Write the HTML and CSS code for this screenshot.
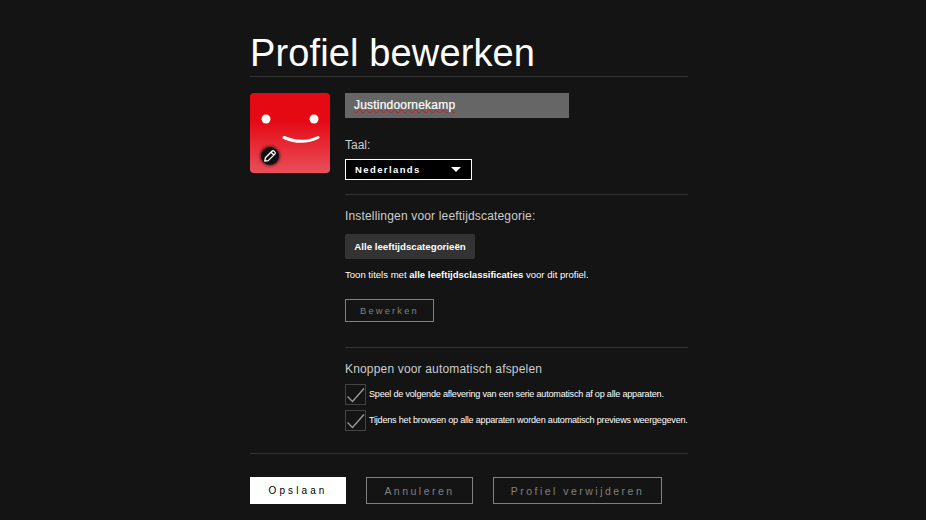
FILE: index.html
```html
<!DOCTYPE html>
<html lang="nl">
<head>
<meta charset="utf-8">
<title>Profiel bewerken</title>
<link rel="stylesheet" href="styles.css">
</head>
<body>
<main class="page">
  <h1 class="title">Profiel bewerken</h1>
  <div class="editor">
    <div class="avatar">
      <svg class="face" width="80" height="80" viewBox="0 0 80 80" aria-hidden="true">
        <circle cx="16" cy="26" r="4.5" fill="#fff"/>
        <circle cx="64" cy="26" r="4.5" fill="#fff"/>
        <path d="M34 44.5 Q52 52 68 44.5" fill="none" stroke="#fff" stroke-width="3" stroke-linecap="round"/>
      </svg>
      <span class="pencil">
        <svg width="14" height="14" viewBox="0 0 14 14" aria-hidden="true">
          <path d="M1.8 12.2 L2.4 8.8 L8.9 2.2 Q10 1.2 11.2 2.3 L11.8 2.9 Q12.8 4 11.8 5.1 L5.2 11.6 Z M8 3.2 L10.9 6" fill="none" stroke="#fff" stroke-width="1.3" stroke-linejoin="round"/>
        </svg>
      </span>
    </div>
    <div class="fields">
      <div class="name-input"><span class="name-text">Justindoornekamp</span></div>
      <div class="language">
        <div class="label">Taal:</div>
        <div class="select"><span>Nederlands</span><i class="caret"></i></div>
      </div>
      <section class="section age">
        <h2 class="label">Instellingen voor leeftijdscategorie:</h2>
        <div class="age-chip">Alle leeftijdscategorieën</div>
        <p class="note">Toon titels met <b>alle leeftijdsclassificaties</b> voor dit profiel.</p>
        <button class="btn edit-btn" type="button">Bewerken</button>
      </section>
      <section class="section autoplay">
        <h2 class="label">Knoppen voor automatisch afspelen</h2>
        <div class="check-row">
          <span class="check"><svg width="21" height="21" viewBox="0 0 21 21" aria-hidden="true"><path d="M2.5 12.5 L7.5 17.5 L19 4.5" fill="none" stroke="#999" stroke-width="1.4"/></svg></span>
          <span class="check-text">Speel de volgende aflevering van een serie automatisch af op alle apparaten.</span>
        </div>
        <div class="check-row">
          <span class="check"><svg width="21" height="21" viewBox="0 0 21 21" aria-hidden="true"><path d="M2.5 12.5 L7.5 17.5 L19 4.5" fill="none" stroke="#999" stroke-width="1.4"/></svg></span>
          <span class="check-text">Tijdens het browsen op alle apparaten worden automatisch previews weergegeven.</span>
        </div>
      </section>
    </div>
  </div>
  <div class="actions">
    <button class="btn save" type="button">Opslaan</button>
    <button class="btn big" type="button">Annuleren</button>
    <button class="btn big" type="button">Profiel verwijderen</button>
  </div>
</main>
</body>
</html>
```
FILE: styles.css
```css
* { box-sizing: border-box; }
html, body { margin: 0; height: 100%; overflow: hidden; background: #141414; }
body { font-family: "Liberation Sans", Arial, sans-serif; color: #fff; }
.page { width: 438px; margin-left: 250px; padding-top: 31px; }
.title { margin: 0; font-size: 38px; line-height: 44px; font-weight: 400; letter-spacing: .13px; border-bottom: 1px solid #333; height: 46px; }
.editor { display: flex; padding-top: 16px; }
.avatar { position: relative; width: 80px; height: 80px; flex: none; border-radius: 4px; background: linear-gradient(#e50914 0 35%, #e8505b 100%); overflow: hidden; }
.face { display: block; }
.pencil { position: absolute; left: 11px; top: 54px; width: 18px; height: 18px; border-radius: 50%; background: #111; box-shadow: 0 0 3px 1px rgba(0,0,0,.6); display: flex; align-items: center; justify-content: center; }
.fields { margin-left: 15px; flex: 1; min-width: 0; }
.name-input { width: 224px; height: 25px; background: #666; padding-left: 9px; font-size: 12px; line-height: 24px; color: #fff; letter-spacing: .2px; }
.name-text { text-decoration: underline wavy #b22; text-decoration-thickness: 1px; text-underline-offset: 0; -webkit-text-stroke: .2px #fff; }
.language { padding-top: 19px; height: 76px; }
.label { margin: 0; font-size: 12px; line-height: 16px; font-weight: 400; color: #ccc; letter-spacing: .17px; }
.language .label { letter-spacing: 0; }
.select { margin-top: 6px; width: 127px; height: 21px; background: #000; border: 1px solid #fff; display: flex; align-items: center; justify-content: space-between; padding: 0 10px 0 9px; font-size: 9.5px; font-weight: 700; letter-spacing: 1.4px; }
.caret { width: 0; height: 0; border-left: 5px solid transparent; border-right: 5px solid transparent; border-top: 5px solid #fff; }
.section { border-top: 1px solid #333; }
.age { height: 153px; padding-top: 13px; }
.age-chip { margin-top: 10px; width: 130px; height: 25px; background: #333; border-radius: 2px; font-size: 9.7px; font-weight: 700; line-height: 25px; text-align: center; }
.note { margin: 10px 0 0; font-size: 9.55px; line-height: 12px; color: #fff; }
.note b { font-weight: 700; }
.btn { font-family: inherit; background: transparent; border: 1px solid #808080; color: #808080; padding: 0; letter-spacing: 2.2px; cursor: default; }
.edit-btn { display: block; margin-top: 18px; width: 89px; height: 23px; font-size: 9.3px; }
.autoplay { padding-top: 13px; height: 106px; }
.autoplay .label { margin-bottom: 4px; }
.check-row { display: flex; align-items: center; height: 26px; }
.check { flex: none; width: 21px; height: 21px; border: 1px solid #444; margin-right: 3px; display: block; position: relative; }
.check svg { position: absolute; left: -1px; top: -1px; }
.check-text { font-size: 9.1px; letter-spacing: -.22px; white-space: nowrap; color: #fff; }
.actions { border-top: 1px solid #333; padding-top: 23px; display: flex; gap: 20px; }
.save { width: 96px; height: 27px; background: #fff; border: 0; color: #000; font-size: 10px; letter-spacing: 3.1px; }
.big { height: 27px; font-size: 10.5px; letter-spacing: 2.48px; width: 107px; }
.big:last-child { width: 169px; }
```
